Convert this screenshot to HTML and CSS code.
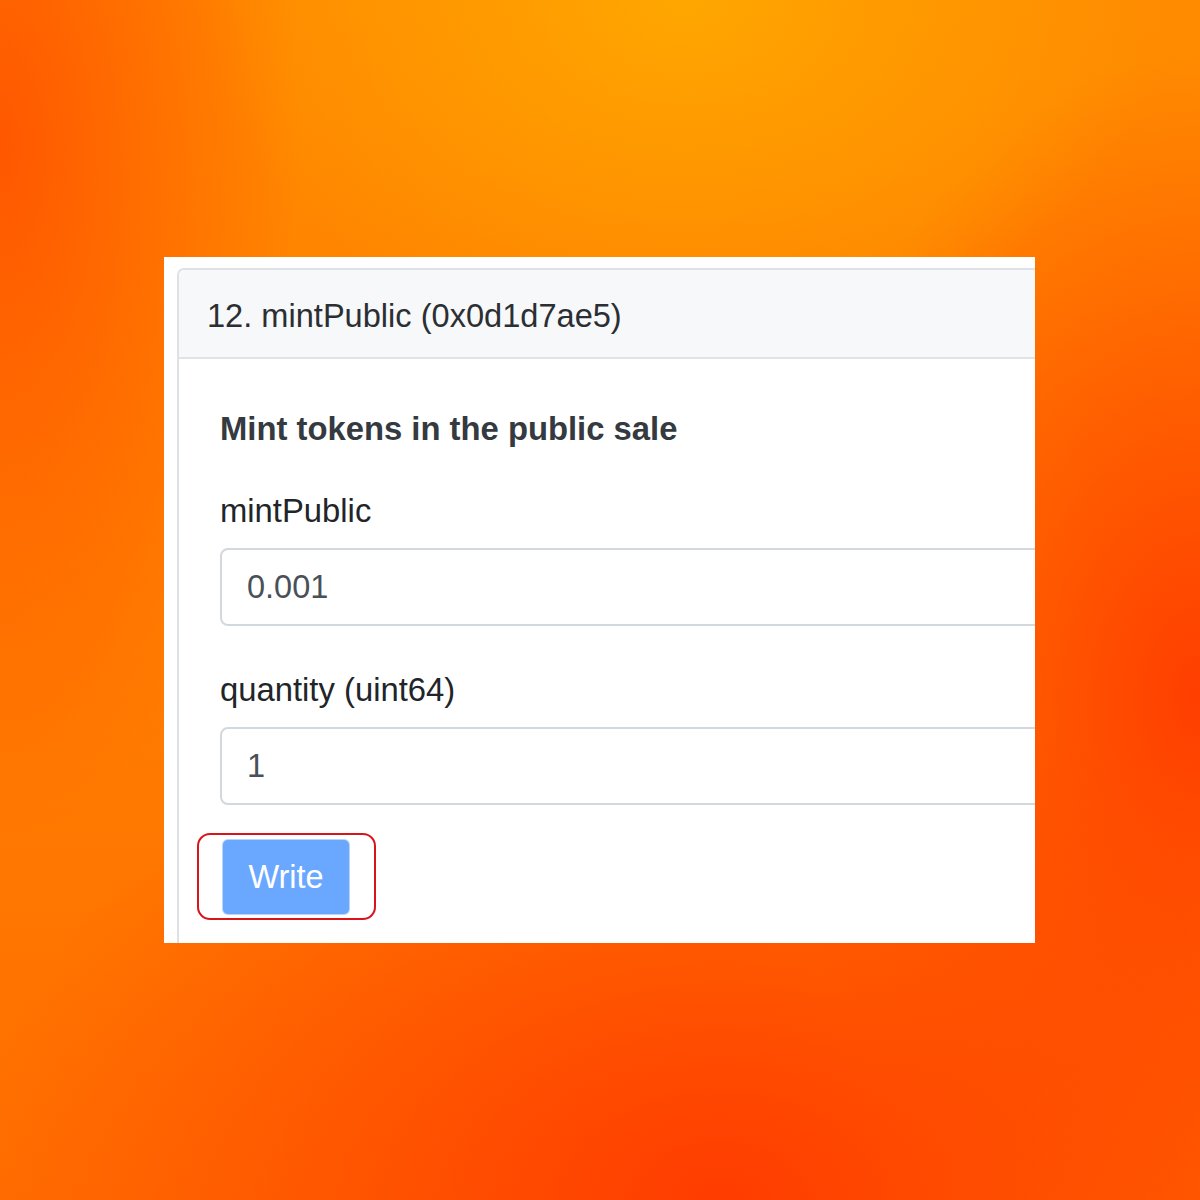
FILE: index.html
```html
<!DOCTYPE html>
<html>
<head>
<meta charset="utf-8">
<link rel="stylesheet" href="styles.css">
</head>
<body>
<div class="stage">
  <div class="card">
    <div class="panel">
      <div class="panel-header">12. mintPublic (0x0d1d7ae5)</div>
      <div class="panel-body">
        <div class="title">Mint tokens in the public sale</div>
        <div class="group">
          <div class="label">mintPublic</div>
          <div class="input">0.001</div>
        </div>
        <div class="group">
          <div class="label">quantity (uint64)</div>
          <div class="input">1</div>
        </div>
        <div class="btn-wrap">
          <div class="btn">Write</div>
          <div class="highlight"></div>
        </div>
      </div>
    </div>
  </div>
</div>
</body>
</html>
```
FILE: styles.css
```css
html, body {
  margin: 0;
  padding: 0;
}
body {
  font-family: "Liberation Sans", Arial, sans-serif;
}
.stage {
  width: 1200px;
  height: 1200px;
  box-sizing: border-box;
  padding: 257px 0 0 164px;
  overflow: hidden;
  background:
    radial-gradient(ellipse 480px 360px at 57% 0%, rgba(255,168,0,0.95), rgba(255,168,0,0) 100%),
    radial-gradient(ellipse 300px 700px at 0% 12%, rgba(255,82,0,0.9), rgba(255,82,0,0) 100%),
    radial-gradient(ellipse 760px 520px at 60% 100%, rgba(255,60,0,1), rgba(255,60,0,0) 100%),
    radial-gradient(ellipse 420px 640px at 100% 58%, rgba(255,62,0,1), rgba(255,62,0,0) 100%),
    radial-gradient(ellipse 520px 420px at 100% 0%, rgba(255,140,0,0.8), rgba(255,140,0,0) 100%),
    linear-gradient(180deg, #ff8a00 0%, #ff7e00 50%, #ff6e00 100%);
}
.card {
  width: 871px;
  height: 686px;
  background: #fff;
  overflow: hidden;
  box-sizing: border-box;
  padding: 11px 0 0 13px;
}
.panel {
  width: 1000px;
  height: 900px;
  border: 2px solid #dee1e5;
  border-radius: 7px 0 0 0;
  box-sizing: border-box;
}
.panel-header {
  background: #f7f8fa;
  border-bottom: 2px solid #dfe2e6;
  border-radius: 6px 0 0 0;
  padding: 26px 28px 22px;
  font-size: 32.6px;
  line-height: 39px;
  color: #2b2f33;
}
.panel-body {
  padding: 50px 0 0 41px;
}
.title {
  font-size: 32.8px;
  line-height: 39px;
  font-weight: bold;
  color: #343a40;
  margin-bottom: 43px;
}
.group {
  margin-bottom: 44px;
}
.label {
  font-size: 32.8px;
  line-height: 39px;
  color: #212529;
  margin-bottom: 18px;
}
.input {
  height: 78px;
  box-sizing: border-box;
  border: 2px solid #d3d8dd;
  border-radius: 8px;
  padding: 0 25px;
  display: flex;
  align-items: center;
  font-size: 32.5px;
  color: #495057;
}
.group + .btn-wrap {
  margin-top: -9px;
}
.btn-wrap {
  position: relative;
  display: inline-block;
  margin-left: 3px;
}
.btn {
  width: 126px;
  height: 74px;
  box-sizing: border-box;
  background: #6aa7ff;
  border-radius: 5px;
  color: #fff;
  font-size: 32.5px;
  display: flex;
  align-items: center;
  justify-content: center;
  box-shadow: 0 0 0 1px #b9d4fb;
}
.highlight {
  position: absolute;
  left: -26px;
  right: -27px;
  top: -7px;
  bottom: -6px;
  border: 2px solid #d8151b;
  border-radius: 13px;
}
```
